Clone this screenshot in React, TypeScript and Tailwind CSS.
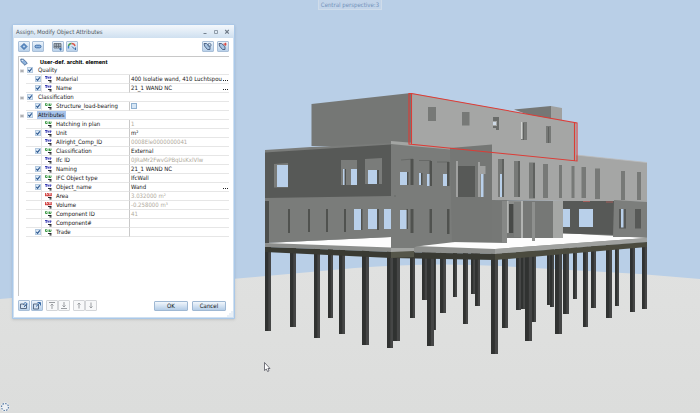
import type { ReactNode } from 'react';

type AttrType = 'text' | 'list' | 'number';

interface Attr {
  name: string;
  type: AttrType;
  value?: string;
  checked?: boolean;
  readOnly?: boolean;
  browse?: boolean;
  toggle?: boolean;
}

interface AttrGroup {
  name: string;
  selected?: boolean;
  attrs: Attr[];
}

const groups: AttrGroup[] = [
  {
    name: 'Quality',
    attrs: [
      { name: 'Material', type: 'text', value: '400 Isolatie wand, 410 Luchtspou', checked: true, browse: true },
      { name: 'Name', type: 'text', value: '21_1 WAND NC', checked: true, browse: true },
    ],
  },
  {
    name: 'Classification',
    attrs: [{ name: 'Structure_load-bearing', type: 'list', checked: true, toggle: true }],
  },
  {
    name: 'Attributes',
    selected: true,
    attrs: [
      { name: 'Hatching in plan', type: 'list', value: '1', readOnly: true },
      { name: 'Unit', type: 'text', value: 'm²', checked: true },
      { name: 'Allright_Comp_ID', type: 'text', value: '0008Ele0000000041', readOnly: true },
      { name: 'Classification', type: 'list', value: 'External', checked: true },
      { name: 'Ifc ID', type: 'text', value: '0JRaMr2FwvGPBqUsKxlVIw', readOnly: true },
      { name: 'Naming', type: 'text', value: '21_1 WAND NC', checked: true },
      { name: 'IFC Object type', type: 'list', value: 'IfcWall', checked: true },
      { name: 'Object_name', type: 'text', value: 'Wand', checked: true, browse: true },
      { name: 'Area', type: 'number', value: '3.032000 m²', readOnly: true },
      { name: 'Volume', type: 'number', value: '-0.258000 m³', readOnly: true },
      { name: 'Component ID', type: 'list', value: '41', readOnly: true },
      { name: 'Component#', type: 'text' },
      { name: 'Trade', type: 'list', checked: true },
    ],
  },
];

const typeColor: Record<AttrType, string> = {
  text: '#3b3fb5',
  list: '#3f9a48',
  number: '#cf3a3a',
};

// left, right, bottom of every foundation pile, back row first
const piles: number[][] = [
  [328, 333, 318], [422, 427, 300], [453, 457, 297], [471, 475, 294], [475, 480, 306],
  [521, 525, 309], [547, 551, 305], [550, 554, 307], [573, 577, 299], [591, 596, 308],
  [615, 619, 306], [434, 436, 330], [393, 400, 341], [410, 415, 318], [440, 446, 313],
  [502, 508, 328], [516, 521, 310], [532, 536, 322], [563, 569, 314], [265, 271, 331],
  [290, 296, 327], [314, 320, 338], [339, 345, 334], [362, 369, 345], [387, 393, 348],
  [427, 434, 346], [463, 468, 324], [491, 498, 354], [525, 532, 341], [555, 562, 334],
  [583, 588, 327], [606, 612, 318], [630, 635, 312], [642, 647, 309],
];

// x, y, width, height
const skyOpenings: number[][] = [
  [277, 165, 11, 22], [343, 169, 1.5, 16], [351, 169, 6, 16], [368, 170, 9, 14],
  [354, 209, 7, 21], [368, 209, 9, 20], [384, 209, 7, 20],
  [400, 172, 7, 13], [419, 173, 2, 12], [427, 174, 2.5, 12], [443, 174, 4, 12],
  [400, 210, 6.5, 19], [481, 174, 2.5, 23], [500, 174, 2, 23],
  [563, 209, 7, 18], [579, 209, 14, 18], [621, 209, 2.5, 18.5],
];

const slits: number[][] = [
  [344.5, 169, 1.5, 16], [377, 170, 2, 14], [288, 209, 2, 24], [308, 209, 2, 23],
  [326, 209, 2, 23], [344, 209, 2, 23], [361, 209, 1.5, 21], [377, 209, 2, 21],
  [407, 172, 1.5, 13], [410.5, 159, 3, 26], [421, 173, 1.5, 12], [429.5, 161, 2.5, 25],
  [447, 162, 2.5, 24], [406.5, 209, 1.5, 20], [410.5, 209, 3, 24], [429.5, 209, 2.5, 24],
  [447, 209, 2.5, 25],
];

const lightSlits: number[][] = [
  [428, 107, 8, 14], [462, 112, 7.5, 13.5], [521, 122, 6, 18], [546, 126, 5, 17],
  [498, 159, 6, 38], [514, 161, 6, 36], [529, 162.5, 6, 36], [543, 164, 5, 34],
  [559, 165, 3, 33], [571.5, 166, 3, 32], [581.5, 167, 4.5, 31], [595, 168.5, 5, 30.5],
  [621, 171, 4, 29], [637, 172, 4, 28],
];

function Rects({ items, fill }: { items: number[][]; fill: string }) {
  return (
    <g fill={fill}>
      {items.map(([x, y, w, h]) => (
        <rect key={`${x}-${y}`} x={x} y={y} width={w} height={h} />
      ))}
    </g>
  );
}

function Viewport() {
  return (
    <svg
      className="absolute inset-0 h-full w-full"
      viewBox="0 0 700 413"
      preserveAspectRatio="xMidYMid slice"
      role="img"
      aria-label="Building model"
    >
      <defs>
        <linearGradient id="ground" x1="0" y1="0" x2="0" y2="1">
          <stop offset="0" stopColor="#e0e1e0" />
          <stop offset="1" stopColor="#dcdddc" />
        </linearGradient>
      </defs>
      <rect width="700" height="413" fill="#b9cfe7" />
      <path d="M0 299 L255 277 L355 268 Q430 262 500 266 L640 274 L700 279 V413 H0Z" fill="url(#ground)" />

      {piles.map(([l, r, b]) => (
        <g key={`${l}-${b}`}>
          <rect x={l} y="245" width={r - l} height={b - 245} fill="#454646" />
          <rect x={l} y="245" width={(r - l) * 0.55} height={b - 245} fill="#303231" />
        </g>
      ))}

      {/* Floor slab */}
      <path d="M265 243 L391 236 L563 232 L647 236 V242 L495 254 L391 252 L265 247Z" fill="#8c8e8c" />
      <path d="M266 243 L391 237 V247.5Z M416 246 L455 241 L563 233 L614 236 L646 238 L495 249Z" fill="#fdfdfd" />
      <path d="M495 249 L647 238 V242 L495 254Z" fill="#9fa19f" />
      <path d="M265 247 L391 252 L495 254 V260 L391 258 L265 252Z" fill="#393a33" />
      <path d="M495 254 L647 242 V247 L495 260Z" fill="#4b4b3f" />
      <path d="M391 248 L414 247 V257 L391 258Z" fill="#55564a" />
      <path d="M391 248 L414 247 V251 L391 252Z" fill="#a3a5a3" />

      {/* Penthouse */}
      <path d="M311.500 104 L411 93 V146 H311.500Z" fill="#757775" />
      <path d="M514 109.500 L551 106 V119 H540Z" fill="#757775" />
      <path d="M551 106 L562 108 V122 H551Z" fill="#a0a1a0" />

      {/* Left wing */}
      <path d="M265 150 L311 147 L391 143 V237 L265 243Z" fill="#7a7c7a" />
      <path d="M265 152.500 L391 144.500 V196 L265 198Z" fill="#575957" />
      <rect x="265" y="201" width="4" height="42" fill="#4c4e4c" />
      <path d="M274 164 L288 163 V187.500 H274Z M341 160 H357 V185 H341Z M365 159 L382 158 V184 H365Z" fill="#7a7c7a" />

      {/* Centre */}
      <path d="M391 143 H455 V242 L416 246.500 L414 248 H391Z" fill="#7a7c7a" />
      <path d="M391 141 L450 146 V149.500 L411 146 L391 144Z" fill="#a3a5a3" />
      <path d="M450 148 L492 145 V201 L507 200 V243 L452 242Z" fill="#757775" />
      <path d="M394 196 H396 M401 160 L413 159 M419 160.500 H431 M437 162 H449" stroke="#626462" strokeWidth="0.8" />
      <rect x="458" y="166" width="17" height="31" fill="#575957" />
      <path d="M456 161 H458 V197 H456Z M478 162 H480 V166 H485.500 V174 H480.500 V197 H478Z" fill="#a0a1a0" />

      {/* Right wing, top storeys */}
      <path d="M411 93 L576 123 V155 L647 162.500 V202 L492 200 V152 L411 144Z" fill="#a5a6a5" />
      <path d="M576 155 L647 162.500" stroke="#bcbdbc" strokeWidth="0.800" />
      <path d="M450 148 L492 144.500 V153Z" fill="#757775" />

      {/* Right wing, ground floor */}
      <path d="M492 200 L553 201 V238 H507 V242 H492Z" fill="#767876" />
      <rect x="507" y="201" width="16" height="32" fill="#8b8d8b" />
      <rect x="509" y="204" width="4.500" height="29" fill="#484a48" />
      <rect x="502" y="201" width="5" height="42" fill="#868886" />
      <path d="M507 201 H508.500 V233 H507Z M521 201 H523 V238 H521Z" fill="#b1b3b1" />
      <rect x="514" y="202" width="7" height="35" fill="#7d7f7d" />
      <rect x="532" y="202" width="3" height="39" fill="#8e908e" />
      <rect x="553" y="201" width="10" height="37" fill="#a5a7a5" />
      <path d="M563 201 H614 V235 L563 233.500Z" fill="#575957" />
      <path d="M614 200 L647 202 V237 H613Z" fill="#7c7e7c" />
      <path d="M619 209 H626 V228.500 H619Z M635 209 H641 V228.500 H635Z" fill="#575957" />

      <Rects items={lightSlits} fill="#777977" />
      <path d="M502 159 H504 V197 H502Z M523 123 H524 V140 H523Z M548 127 H549 V143 H548Z M518 161 H520 V197 H518Z M533 163 H535 V198 H533Z" fill="#5f615f" />
      <path d="M521 122 H522.500 V139 H521Z" fill="#d0d2d0" />
      <path d="M493 117 H499 V130 H496 V128 H493 V126 H497 V121 H493Z" fill="#6a6c6a" />
      <rect x="493" y="122" width="3" height="3" fill="#cdd9e6" />
      <Rects items={slits} fill="#50524f" />
      <Rects items={skyOpenings} fill="#b9d0ea" />

      {/* Selected element outline */}
      <path
        d="M409 93.500 L411.500 93.500 L577 123 V161 L409 144Z M411.500 93.500 V144 M574.500 123 V160.500"
        fill="none"
        stroke="#dc3c36"
        strokeWidth="1.100"
      />
      <path d="M583 201.500 H590 M606 202 H613" stroke="#b9605c" strokeWidth="0.800" />

      {/* Mouse pointer */}
      <path d="M264.500 362.500 V370.500 L266.300 369 L267.600 371.500 L269 370.800 L267.900 368.500 H270Z" fill="#fff" stroke="#3d3f4a" strokeWidth="0.700" />

      {/* Busy ring */}
      <circle cx="5" cy="407" r="4.600" fill="#eef1f4" />
      <circle cx="5" cy="407" r="3.500" fill="none" stroke="#5d7ea6" strokeWidth="1.200" strokeDasharray="1.500 1.200" />
    </svg>
  );
}

function Check({ label, checked, plain }: { label: string; checked?: boolean; plain?: boolean }) {
  return (
    <span className="relative block h-[6px] w-[6px] shrink-0">
      <input
        type="checkbox"
        defaultChecked={checked}
        aria-label={label}
        className={`peer block h-[6px] w-[6px] appearance-none border ${plain ? 'border-[#8fb0d0] bg-[#d6e6f5]' : 'border-[#b4cae0] bg-[#dce9f6]'}`}
      />
      <svg viewBox="0 0 6 6" className="pointer-events-none absolute inset-0 hidden peer-checked:block" fill="none">
        <path d="M1.300 2.800 L2.600 4.300 L4.800 1.400" stroke="#2c5890" strokeWidth="1.100" />
      </svg>
    </span>
  );
}

function TypeIcon({ type }: { type: AttrType }) {
  const color = typeColor[type];
  return (
    <svg viewBox="0 0 7 7" className="h-[7px] w-[7px] shrink-0">
      {type === 'text' && <path d="M0 .5 H2.500 M1.200 .5 V3 M2.500 2 H4 M2.500 1.200 H4 M5.200 .5 V3 M4.500 1.200 H6.500" stroke={color} strokeWidth="1" fill="none" />}
      {type === 'list' && <path d="M0 .8 H2 M.5 .8 V2.500 H2 M3 .5 V3 M4.500 .5 V3 M4.500 2.500 H6.200 M6 .5 V2" stroke={color} strokeWidth="1" fill="none" />}
      {type === 'number' && <path d="M.5 0 V3 M2 .5 H3.500 V2.700 H2Z M5 0 V3 M6.300 0 V3 M0 2.700 H6.500" stroke={color} strokeWidth="0.900" fill="none" />}
      <path d="M3 4.500 H6.500 M4.500 5.900 H6.500" stroke="#26282c" strokeWidth="1.200" />
    </svg>
  );
}

function ToolButton({ label, muted, children }: { label: string; muted?: boolean; children: ReactNode }) {
  return (
    <button
      type="button"
      aria-label={label}
      className={`flex h-[11px] w-[12px] items-center justify-center rounded-[1px] border ${
        muted
          ? 'border-[#d3d5d8] bg-[#f7f8f9] text-[#9a9da1]'
          : 'border-[#a9bfd8] bg-linear-to-b from-[#edf4fb] to-[#b9d1ea] text-[#3e6ea8]'
      }`}
    >
      <svg viewBox="0 0 10 9" className="h-[9px] w-[10px] shrink-0" fill="none" stroke="currentColor">
        {children}
      </svg>
    </button>
  );
}

function TitleBar() {
  return (
    <header className="flex h-[13px] items-center justify-between bg-linear-to-b from-[#f4f8fc] to-[#cfe0f0] pr-[3px] pl-[3px] text-[#4f5862]">
      <h1 className="text-[6px] leading-[9px]">Assign, Modify Object Attributes</h1>
      <div className="flex gap-[3px]">
        <button type="button" aria-label="Minimize" className="h-2 w-2">
          <svg viewBox="0 0 8 8" className="h-2 w-2"><path d="M2.500 5.500 H5.500" stroke="#73808e" /></svg>
        </button>
        <button type="button" aria-label="Maximize" className="h-2 w-2">
          <svg viewBox="0 0 8 8" className="h-2 w-2"><path d="M2.500 2.500 H5.500 V5.500 H2.500Z" fill="none" stroke="#8794a2" strokeWidth="0.900" /></svg>
        </button>
        <button type="button" aria-label="Close" className="h-2 w-2">
          <svg viewBox="0 0 8 8" className="h-2 w-2"><path d="M2.200 2 L5.800 5.600 M5.800 2 L2.200 5.600" stroke="#6c7885" strokeWidth="1.100" /></svg>
        </button>
      </div>
    </header>
  );
}

function TopTools() {
  return (
    <div className="flex justify-between">
      <div className="flex gap-2">
        <div className="flex gap-[2px]">
          <ToolButton label="Add attribute">
            <path d="M5 1.500 L8 4.500 L5 7.500 L2 4.500Z" fill="#5f8fc6" />
            <path d="M5 3.500 V5.500 M4 4.500 H6" stroke="#c9dcf0" strokeWidth="0.800" />
          </ToolButton>
          <ToolButton label="Remove attribute">
            <rect x="2" y="3.200" width="6" height="2.600" rx="1.300" fill="#8fb3dc" />
          </ToolButton>
        </div>
        <div className="flex gap-[2px]">
          <ToolButton label="Table">
            <path d="M1 1.500 H8 V6 H1Z M1 3 H8 M1 4.500 H8 M3.300 1.500 V6 M5.600 1.500 V6" stroke="#59636f" strokeWidth="0.800" />
            <path d="M6 7 H9 M7.500 6 V8.500" />
          </ToolButton>
          <ToolButton label="Color by attribute">
            <path d="M1.500 6.500 V4" stroke="#3b82c8" strokeWidth="1.400" />
            <path d="M1.500 4 Q2 1.500 4.500 1.500" stroke="#4a9d57" strokeWidth="1.400" />
            <path d="M4.500 1.500 Q7.500 1.500 8 4" stroke="#d8594d" strokeWidth="1.400" />
            <path d="M5 4.500 L8 7.500 M8.500 5.500 V8" />
          </ToolButton>
        </div>
      </div>
      <div className="flex gap-[3px]">
        <ToolButton label="Match attributes">
          <path d="M1 1.500 L3.500 1.500 L7 4.500 V7.500 H4.500 L1.500 4Z" fill="#a8c4e2" stroke="#44597a" strokeWidth="0.900" />
          <circle cx="6.500" cy="3" r="1.600" stroke="#5d7799" />
        </ToolButton>
        <ToolButton label="Transfer attributes">
          <path d="M1 1.500 L3.500 1.500 L7 4.500 V7.500 H4.500 L1.500 4Z" fill="#a8c4e2" stroke="#44597a" strokeWidth="0.900" />
          <path d="M5.500 2.200 H8.500 M7.500 .8 V3.800" stroke="#d94a42" strokeWidth="1.200" />
        </ToolButton>
      </div>
    </div>
  );
}

function GroupRow({ group }: { group: AttrGroup }) {
  return (
    <tr className="h-[9px]">
      <th scope="rowgroup" colSpan={2} className="p-0 text-left font-normal">
        <div className="flex h-[9px] items-center pl-px">
          <button type="button" aria-label={`Collapse ${group.name}`} className="mr-[3px] h-[4px] w-[4px] shrink-0 bg-[#e3e4e6]">
            <svg viewBox="0 0 4 4" className="block h-[4px] w-[4px]"><path d="M.5 2 H3.500" stroke="#6f7378" strokeWidth="0.900" /></svg>
          </button>
          <div className="flex h-[9px] flex-1 items-center border-b border-[#e6e6e6]">
            <Check label={group.name} checked />
            <span className={`ml-1 pr-px pl-px leading-[8px] ${group.selected ? 'bg-[#a9c5ec]' : ''}`}>{group.name}</span>
          </div>
        </div>
      </th>
    </tr>
  );
}

function AttrRow({ attr }: { attr: Attr }) {
  return (
    <tr className="h-[9px]">
      <th scope="row" className="p-0 pl-[7px] text-left font-normal">
        <div className="flex h-[9px] items-center border-b border-[#e6e6e6]">
          <span className="flex h-[9px] w-[16px] shrink-0 items-center border-r border-[#e6e6e6] pl-[9px]">
            {attr.checked && <Check label={attr.name} checked />}
          </span>
          <span className="ml-[3px] flex items-center gap-1">
            <TypeIcon type={attr.type} />
            {attr.name}
          </span>
        </div>
      </th>
      <td className="p-0">
        <div className={`flex h-[9px] items-center justify-between border-b border-l border-b-[#e6e6e6] border-l-[#c9c9c9] pl-px ${attr.readOnly ? 'text-[#b0aa9c]' : ''}`}>
          {attr.toggle ? (
            <Check label={`${attr.name} value`} plain />
          ) : (
            <span className="whitespace-nowrap">{attr.value}</span>
          )}
          {attr.browse && (
            <button type="button" aria-label={`Browse ${attr.name}`} className="flex h-[8px] w-[6px] shrink-0 items-end justify-center bg-white">
              <svg viewBox="0 0 6 3" className="h-[3px] w-[6px]" fill="#222">
                <path d="M0 0 h1 v1 h-1Z M2 0 h1 v1 h-1Z M4 0 h1 v1 h-1Z" />
              </svg>
            </button>
          )}
        </div>
      </td>
    </tr>
  );
}

function AttrTable() {
  return (
    <div className="mt-[4px] flex-1 border-t border-l border-[#c8c8c8]">
      <table className="w-full table-fixed border-separate border-spacing-0 text-[6px] leading-[8px] text-[#161616]">
        <colgroup>
          <col className="w-[110px]" />
          <col />
        </colgroup>
        <thead>
          <tr className="h-[9px]">
            <th colSpan={2} className="p-0 text-left font-['Roboto',sans-serif] font-bold text-black">
              <div className="flex h-[9px] items-center gap-[12px] pl-px">
                <svg viewBox="0 0 8 8" className="h-2 w-2 shrink-0">
                  <path d="M.8 1 L3.500 1.300 L7.300 5 L5 7.300 L1 3.500Z" fill="#8fb3dc" stroke="#3d628f" strokeWidth="0.800" />
                  <circle cx="2.200" cy="2.400" r="0.600" fill="#fff" />
                </svg>
                User-def. archit. element
              </div>
            </th>
          </tr>
        </thead>
        {groups.map((group) => (
          <tbody key={group.name}>
            <GroupRow group={group} />
            {group.attrs.map((attr) => (
              <AttrRow key={attr.name} attr={attr} />
            ))}
          </tbody>
        ))}
      </table>
    </div>
  );
}

function FooterButton({ children }: { children: ReactNode }) {
  return (
    <button
      type="button"
      className="h-[10px] w-[34px] rounded-[1px] border border-[#9fb8d3] bg-linear-to-b from-[#f2f7fc] to-[#b4cde7] text-center text-[6px] leading-[8px] text-[#111]"
    >
      {children}
    </button>
  );
}

function Footer() {
  return (
    <footer className="mt-[4px] flex items-center justify-between pr-[3px]">
      <div className="flex gap-[3px]">
        <div className="flex gap-px">
          <ToolButton label="Open favorite">
            <path d="M1.500 7.500 V3 H4 L5 4 H7.500 V7.500Z" fill="#d5e3f2" stroke="#4d607a" strokeWidth="0.900" />
            <path d="M4.500 2.500 Q6.500 .5 8.500 3 M5 6 L8 3" />
          </ToolButton>
          <ToolButton label="Save favorite">
            <path d="M1.500 3 H6.500 V8 H1.500Z" fill="#d5e3f2" stroke="#4d607a" strokeWidth="0.900" />
            <path d="M4 5.500 L8 2 M5.500 1.500 H8.500 V4.500" />
          </ToolButton>
        </div>
        <div className="flex">
          <ToolButton label="Move to top" muted>
            <path d="M2 1.500 H8 M5 8 V3 M3.500 4.500 L5 3 L6.500 4.500" />
          </ToolButton>
          <ToolButton label="Move to bottom" muted>
            <path d="M2 7.500 H8 M5 1 V6 M3.500 4.500 L5 6 L6.500 4.500" />
          </ToolButton>
        </div>
        <div className="flex">
          <ToolButton label="Move up" muted>
            <path d="M5 7.500 V2 M3.500 3.500 L5 2 L6.500 3.500" />
          </ToolButton>
          <ToolButton label="Move down" muted>
            <path d="M5 1.500 V7 M3.500 5.500 L5 7 L6.500 5.500" />
          </ToolButton>
        </div>
      </div>
      <div className="flex gap-1">
        <FooterButton>OK</FooterButton>
        <FooterButton>Cancel</FooterButton>
      </div>
    </footer>
  );
}

function AttributesDialog() {
  return (
    <section
      role="dialog"
      aria-label="Assign, Modify Object Attributes"
      className="absolute top-6 left-3 flex min-h-[295px] w-[223px] flex-col rounded-t-[2px] border border-[#aac8e8] bg-[#cfe0f1] shadow-sm"
    >
      <TitleBar />
      <div className="relative mx-px mb-px flex flex-1 flex-col bg-white px-1 pt-[3px] pb-[6px]">
        <TopTools />
        <AttrTable />
        <Footer />
        <svg viewBox="0 0 6 6" className="absolute right-0 bottom-0 h-[6px] w-[6px]" fill="#a9c4e0">
          <path d="M4.500 .5 h1 v1 h-1Z M2.500 2.500 h1 v1 h-1Z M4.500 2.500 h1 v1 h-1Z M.5 4.500 h1 v1 h-1Z M2.500 4.500 h1 v1 h-1Z M4.500 4.500 h1 v1 h-1Z" />
        </svg>
      </div>
    </section>
  );
}

export default function App() {
  return (
    <main className="relative h-screen overflow-hidden bg-[#b9cfe7] font-['DejaVu_Sans_Condensed','Liberation_Sans',sans-serif]">
      <Viewport />
      <p className="relative mx-auto h-[10px] w-[64px] border border-t-0 border-[#cfdcea] bg-[#c2d4e9] text-center text-[6px] leading-[9px] whitespace-nowrap text-[#7392ba]">
        Central perspective:3
      </p>
      <AttributesDialog />
    </main>
  );
}
